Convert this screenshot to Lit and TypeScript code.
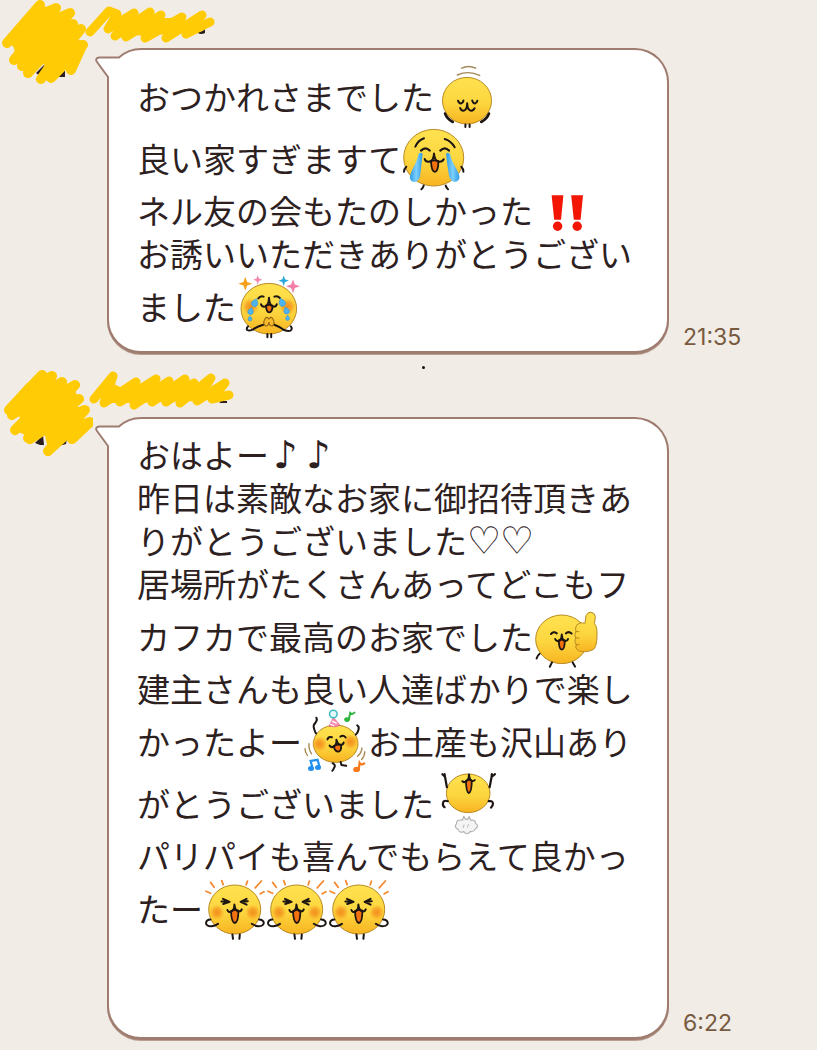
import { LitElement, html, svg, css, nothing, TemplateResult, SVGTemplateResult } from "lit";
import { customElement, property } from "lit/decorators.js";

type Sticker = "nod" | "cry" | "thanks" | "bang" | "thumb" | "party" | "jump" | "joy";
type Part = string | { s: Sticker };
interface Message {
  id: number;
  time: string;
  spare: boolean;
  avatar: string;
  avatarFill: string;
  avatarBits: string[];
  name: string;
  nameFill: string;
  nameBits: string[];
  lines: Part[][];
}

const INK = "#1c1512";

const face = (cx: number, cy: number, rx: number, ry: number) => svg`
  <ellipse cx=${cx} cy=${cy} rx=${rx} ry=${ry} fill="url(#skin)" stroke="#b98a22" stroke-width="1"/>`;
const cheek = (cx: number, cy: number, r = 8) => svg`<circle cx=${cx} cy=${cy} r=${r} fill="url(#blush)"/>`;
const ink = (d: string, w = 2) => svg`
  <path d=${d} fill="none" stroke=${INK} stroke-width=${w} stroke-linecap="round" stroke-linejoin="round"/>`;
const line = (d: string, color: string, w = 1.5) => svg`
  <path d=${d} fill="none" stroke=${color} stroke-width=${w} stroke-linecap="round"/>`;
const tongue = (d: string) => svg`
  <path d=${d} fill="#f4710f" stroke=${INK} stroke-width="1.8" stroke-linejoin="round"/>`;
const spark = (x: number, y: number, r: number, color: string) => svg`
  <path fill=${color} d=${`M${x} ${y - r}L${x + r * 0.26} ${y - r * 0.26}L${x + r} ${y}L${x + r * 0.26} ${y + r * 0.26}L${x} ${y + r}L${x - r * 0.26} ${y + r * 0.26}L${x - r} ${y}L${x - r * 0.26} ${y - r * 0.26}Z`}/>`;
const drop = (x: number, y: number, r: number, tilt: number) => svg`
  <path fill="#4db4ee" stroke="#2f93d6" stroke-width=".5" transform=${`translate(${x} ${y}) rotate(${tilt})`}
    d=${`M0 ${-r * 1.3}C${r * 0.5} ${-r * 0.6} ${r} ${-r * 0.2} ${r} ${r * 0.3}A${r} ${r} 0 0 1 ${-r} ${r * 0.3}C${-r} ${-r * 0.2} ${-r * 0.5} ${-r * 0.6} 0 ${-r * 1.3}Z`}/>`;

const DEFS = svg`
  <defs>
    <linearGradient id="skin" x1="0" y1="0" x2="0" y2="1">
      <stop offset="0" stop-color="#ffe24f"/><stop offset=".55" stop-color="#fcd63f"/><stop offset="1" stop-color="#f8b421"/>
    </linearGradient>
    <radialGradient id="blush">
      <stop offset="0" stop-color="#f28a1c" stop-opacity=".95"/><stop offset=".5" stop-color="#f5961f" stop-opacity=".7"/>
      <stop offset="1" stop-color="#f9b02a" stop-opacity="0"/>
    </radialGradient>
    <linearGradient id="tear" x1="0" y1="0" x2="1" y2="0">
      <stop offset="0" stop-color="#2c9be8"/><stop offset=".5" stop-color="#7fd0fa"/><stop offset="1" stop-color="#2c9be8"/>
    </linearGradient>
  </defs>`;

const ART: Record<Sticker, { label: string; art: SVGTemplateResult }> = {
  nod: {
    label: "おじぎ",
    art: svg`
      ${line("M25.7 1.2Q32.5 -2.2 39.7 1.2", "#a5895a", 1.4)}
      ${line("M21.3 8Q32.5 3 43.7 8.4", "#a5895a", 1.4)}
      ${face(31, 33.7, 24.5, 23.3)}
      ${ink("M22 33.7Q23 36.6 25 36.4Q27.2 36 27.4 33.5")}
      ${ink("M36.2 33.5Q37 36.4 39 36.4Q41 36 41.4 33.7")}
      ${ink("M24.2 41Q25 44 28 43.6Q31 42.6 31.2 36.2Q31.4 42.6 34.4 43.6Q37.6 44 38.6 41.2")}
      ${ink("M9 46.5Q11 52 16.8 55M53 46.5Q51 52 45.2 55", 2.6)}
      ${ink("M29.4 57.5V60M33.6 57.5V60")}`,
  },
  cry: {
    label: "号泣",
    art: svg`
      ${face(30.7, 28.7, 30, 28.3)}
      ${ink("M12.3 17.7Q15 11.4 21 9.3M41.7 10Q48 11.8 51.7 18.3")}
      ${ink("M18 21.6Q22.5 17.2 26.7 21.6M37.3 21.6Q41.8 17.2 46 21.6", 2.2)}
      <path fill="url(#tear)" d="M15.6 25Q17.4 22.6 19.6 24.6Q18.6 35 17.2 46.6Q16.2 53 11.4 53Q6.6 52.6 7 47.6C8.4 40 13.6 35 15.6 25Z"/>
      <path fill="url(#tear)" d="M47 25Q45.2 22.6 43 24.6Q44 35 46 46.6Q47.2 53 52 53Q56.8 52 56.4 47.6C55 40 49 35 47 25Z"/>
      ${tongue("M28 32Q31 30.6 35.4 32Q35.4 42.6 31.8 42.8Q28.4 42.6 28 32Z")}
      ${ink("M21.7 30Q22.4 33 26 32.8Q30.8 31.8 31 24.6Q31.4 31.8 36 32.8Q39.6 33 40.7 30.2")}
      ${ink("M3.3 37.7Q1.2 39.6 1 42.8M58.3 37.7Q60.4 39.6 60.4 42.8M20.7 56.6Q20.2 59 18.3 60.3M42.7 56.6Q43.4 59 45 60.3")}`,
  },
  thanks: {
    label: "感謝",
    art: svg`
      ${face(30.8, 31.7, 27.8, 25.3)}
      ${cheek(12.4, 29.6, 9)}${cheek(49.6, 29.6, 9)}
      ${spark(7.3, 6.8, 7, "#f8a01c")}${spark(19.7, 2.8, 4.6, "#f486ac")}
      ${spark(45.7, 3.7, 5.2, "#28a7dd")}${spark(55, 9.3, 7, "#f17fa8")}
      ${ink("M20.3 21.4Q22.4 18.4 25.6 19.6M36.4 19.6Q39.6 18.2 42 21.2")}
      ${drop(17, 25.6, 3.2, 22)}${drop(12.8, 34, 2.8, 16)}${drop(12, 41.4, 2, 0)}
      ${drop(43.9, 25.2, 3.2, -22)}${drop(48.4, 33.4, 2.8, -16)}${drop(49.6, 40.8, 2, 0)}
      ${tongue("M28 28.6Q31 27.2 34.6 28.6Q34.4 35.2 31.2 35.4Q28.2 35 28 28.6Z")}
      ${ink("M23 27.2Q24 30.2 27 29.6Q30.8 28.4 31 20.8Q31.4 28.4 35 29.6Q38 30 38.8 27.2")}
      ${ink("M25.3 47.7Q18.5 49.5 15 52.6Q10 54.4 8.9 52.8Q8.4 51 10 49.4M36.3 47.7Q42.6 50 46 53Q51.8 55 53.2 53Q54.4 51 52.8 49.4")}
      <path fill="#f9bb2a" stroke="#8d6517" stroke-width="1.1" d="M30.9 42Q28.6 38.6 26.6 42.4Q24.6 47 27.6 49Q30.6 49.4 30.9 45Q31.4 49.4 34.2 49Q37.2 47 35.2 42.4Q33.2 38.6 30.9 42Z"/>
      ${ink("M29.4 57V60.2M33.2 57V60.2")}`,
  },
  thumb: {
    label: "いいね",
    art: svg`
      ${face(26.7, 32.3, 26, 24.3)}
      ${ink("M16 27Q18.6 23.8 21.8 26.4M30.8 26.4Q33.6 23.8 36.6 26.6")}
      ${tongue("M23.8 33.4Q26.6 32 29.8 33.4Q29.6 42.4 26.8 42.6Q24 42.2 23.8 33.4Z")}
      ${ink("M20.2 32Q21 34.6 23.6 34Q26.6 33 26.8 27.6Q27 33 30 34Q32.4 34.4 33 32")}
      ${ink("M4.7 46.8Q2.4 48.4 1.6 51.6M17 55.4L14.8 59.8M37.7 55.4L40 59.6")}
      <path fill="url(#skin)" stroke="#b98a22" stroke-width="1" stroke-linejoin="round"
        d="M50 16.2L51 8.6Q52.6 5 56 5.2Q60 6 60.4 9.6L59.4 16.6Q62.4 19.6 62 28Q62 39 58.6 42.4Q50 46.4 43.4 43.6Q39.4 41.6 41.2 37.6Q38.6 34.6 40.8 31Q38.6 27.6 41 24.6Q39.8 21 41.6 18.2Q44.6 15 50 16.2Z"/>
      <path fill="none" stroke="#b98a22" stroke-width="1" stroke-linecap="round" d="M41 24.6H44M40.8 31H44M41.2 37.6H44"/>`,
  },
  party: {
    label: "パーティー",
    art: svg`
      ${face(31.7, 31.7, 22.3, 18.7)}
      ${cheek(15.6, 32, 8)}${cheek(46.8, 29.8, 8)}
      <path fill="#f790b0" stroke="#e35f8c" stroke-width=".8" stroke-linejoin="round" d="M29.3 5.2L25.2 14.2Q30.6 15.8 36 13.4Z"/>
      <path fill="none" stroke="#fff" stroke-width="1.3" d="M27.6 9L32.8 11.4M26.2 12L30.2 14"/>
      <circle cx="29.3" cy="2" r="3.8" fill="#e2fafa" stroke="#3dbcc4" stroke-width="1.5"/>
      ${line("M44.8 7.4L46.2 1Q48 3 50.4 .6", "#2bb53c", 2)}
      <ellipse cx="43" cy="7.6" rx="2.8" ry="2.3" fill="#2bb53c"/>
      ${ink("M12.4 5.7Q13.6 8 11.6 10.4Q8.8 13 10 16.4Q10.6 19.4 12 21.4M53.2 13.4Q55.6 14.6 54.4 18Q54 20.4 51.8 22.6")}
      ${ink("M23.4 27.4Q24.6 24 28 25.2M36.4 24.6Q39.2 22.6 41.6 25.4")}
      ${tongue("M29.6 34Q32.8 32 37 32.8Q37.8 38.6 34.6 39.6Q31 40 29.6 34Z")}
      ${ink("M25.6 33.6Q27.2 36 29.6 34.6Q33 32.8 32.4 27.8Q33.8 32.6 36.6 32.8Q39.4 32.8 39.6 30.6")}
      ${line("M1 36.6Q1 40.6 3.4 43.4M5 31.6Q4.6 37.6 7.6 41.8M57.9 36Q57.8 40.6 53.6 44.2M60.8 39.8Q60.6 44.6 57.6 47.6", "#a98a52", 1.4)}
      ${ink("M28.6 51.2Q32 53 30.2 55.6Q29.6 57 28.4 58.8M36.7 49.9L37.4 53L42.2 53.8")}
      <g fill="#1f8ff0"><ellipse cx="7" cy="56.6" rx="3" ry="2.5"/><ellipse cx="14" cy="55.4" rx="3" ry="2.5"/></g>
      <path fill="none" stroke="#1f8ff0" stroke-width="2.2" d="M8.6 56.4L6.6 48.8L13.6 47.8L15.6 55"/>
      <ellipse cx="52.6" cy="57.4" rx="3.4" ry="2.7" fill="#f8781c"/>
      ${line("M54.8 56.6L55.6 50.8Q57.4 53.6 60.2 51.4", "#f8781c", 2.2)}`,
  },
  jump: {
    label: "ジャンプ",
    art: svg`
      ${face(32.2, 19.3, 21.8, 19.3)}
      ${ink("M6.4 .2L9 2.8L8.6 .2M9 2.8L10.9 13.2M59 .2L55.6 2.8L55.8 .2M55.6 2.8L53.6 13.2", 2.2)}
      ${ink("M11.8 27.2Q7.4 25.8 7 29Q6.4 32 8.6 33.2M52.8 27.2Q56.6 26.4 57 29.6Q57 32 55 33.6", 2.2)}
      ${tongue("M30 6.8Q33 5 35.8 6.8Q35.6 18.8 32.8 19Q30.2 18.6 30 6.8Z")}
      ${ink("M26.3 7.2Q27.6 9 30 7.4Q33 5.6 33 .4Q33.2 5.6 35.8 6.8Q37.6 7.6 38.8 6")}
      <path fill="#f4f4f4" stroke="#b3b3b3" stroke-width="1.2" stroke-linejoin="round"
        d="M26.4 46.2L27.8 42.4L29.6 45.4L31.6 45.4L33.2 42.6L34.6 46.2Q39.6 45.4 39.4 49.2Q43.6 51.4 39.6 54.8Q37.4 58.4 34.4 57.4Q31 62 27.8 57.6Q23.4 59.4 22 55.4Q17.6 53 20.4 49.8Q20.4 45.2 26.4 46.2Z"/>
      ${line("M28 51L27.4 53.4M32.4 50.6L31.6 53", "#b3b3b3", 1)}`,
  },
  joy: {
    label: "大喜び",
    art: svg`
      ${line("M1 12.2L5.6 14.3M5.6 3.4L9.2 8.2M16.7 1.6L18.2 5.6M42.4 2.2L41.2 5.8M56.4 2L50.2 8.8M59 12.8L55.2 14.8", "#f58a33", 1.8)}
      ${face(29.7, 30.5, 26, 24.5)}
      ${cheek(11.9, 33.3, 8)}${cheek(47.8, 33.3, 8)}
      ${ink("M18 19.8L24.6 22.8L18.2 25M16.4 22.6H23.4M41.6 19.8L35.6 22.8L41.6 25.6M36.4 22.8L42.8 22.2")}
      ${tongue("M26 32Q29.6 30 33.4 31.6Q33.4 43.8 29.8 44Q26.4 43.6 26 32Z")}
      ${ink("M22.4 31Q23.4 33.8 26 32.8Q29.4 31.4 29.4 25.6Q30 31.4 33.2 32.4Q36 32.8 36.8 30.4")}
      ${ink("M5.4 40.4Q1.4 40.6 1 44Q1.2 47.4 6.6 47.2Q10 46.8 13 44.8M54 40.4Q58.4 40.6 58.8 44Q58.4 47.4 53 47.2Q49.6 46.8 46.8 44.8")}
      ${ink("M27.4 55.4L28 59.8M34.8 55.4L34.4 59.8")}`,
  },
  bang: { label: "!!", art: svg`` },
};

const JOY: Part = { s: "joy" };

const MESSAGES: Message[] = [
  {
    id: 1,
    time: "21:35",
    spare: false,
    avatar: "M40 5L7 43L32 18L56 8L14 60L44 24L70 13L22 66L48 38L73 24L28 73L56 42L81 29L41 79L64 46L83 45L51 78L72 54L82 46L71 70",
    avatarFill: "M40 4L24 18L8 40L14 48L16 60L24 64L36 66L44 64L50 76L64 64L72 66L80 46L76 42L78 30L70 28L70 16L56 12Z",
    avatarBits: ["M36 73L45 64L40 76Z", "M58 77L65 68V77Z"],
    name: "M90 32L109 11L117 14L108 29L134 13L115 36L150 12L126 37L161 15L145 38L182 17L166 38L202 15L186 34L210 22",
    nameFill: "M112 14L120 20L134 14L144 18L152 14L162 18H182L184 22L200 18V26L186 32L168 34L146 36L120 34L110 26Z",
    nameBits: ["M197 32Q204 32 205 28V33Q201 35 198 33Z"],
    lines: [
      ["おつかれさまでした", { s: "nod" }],
      ["良い家すぎますて", { s: "cry" }],
      ["ネル友の会もたのしかった", { s: "bang" }],
      ["お誘いいただきありがとうござい"],
      ["ました", { s: "thanks" }],
    ],
  },
  {
    id: 2,
    time: "6:22",
    spare: true,
    avatar: "M42 6L9 41L30 18L52 7L12 46L40 26L62 13L15 61L50 30L75 16L28 69L60 36L79 30L30 70L58 52L85 41L48 82L72 60L90 53L72 70",
    avatarFill: "M42 5L28 14L10 40L14 46L20 48L16 62L30 68L44 62L48 80L62 66L72 68L84 54L84 44L78 40V28L72 16L60 14L52 8Z",
    avatarBits: ["M35 74L43 66L44 76L40 76Z", "M59 77L67 69L66 75Z"],
    name: "M94 30L113 7L104 34L136 13L120 33L156 10L134 36L169 12L152 33L185 10L166 33L194 14L180 34L211 9L197 32L225 14L212 30L229 26",
    nameFill: "M100 28L112 14L120 18L134 16L140 20L154 14L160 18L168 16L174 18L184 14L196 18L208 14L212 20L222 18V28L198 32L134 34L104 34Z",
    nameBits: ["M219 32H227V34H220Z", "M213 16H216V18H213Z"],
    lines: [
      ["おはよー♪♪"],
      ["昨日は素敵なお家に御招待頂きあ"],
      ["りがとうございました♡♡"],
      ["居場所がたくさんあってどこもフ"],
      ["カフカで最高のお家でした", { s: "thumb" }],
      ["建主さんも良い人達ばかりで楽し"],
      ["かったよー", { s: "party" }, "お土産も沢山あり"],
      ["がとうございました", { s: "jump" }],
      ["パリパイも喜んでもらえて良かっ"],
      ["たー", JOY, JOY, JOY],
    ],
  },
];

@customElement("chat-message")
export class ChatMessage extends LitElement {
  @property({ attribute: false }) message!: Message;

  static styles = css`
    :host { display: block; }
    article {
      display: grid;
      grid-template-columns: 88px minmax(0, 1fr);
    }
    svg { display: block; overflow: visible; }
    .avatar { width: 88px; height: 88px; }
    .name { width: 152px; height: 48px; }
    .row { display: flex; align-items: flex-end; padding-left: 19px; }
    .bubble {
      position: relative;
      flex: 1;
      box-sizing: border-box;
      padding: 17px 28px 12px 28px;
      background: #fff;
      border: solid #9f7c70;
      border-width: 2px 2px 3px;
      border-radius: 34px;
      box-shadow: 0 1px 0 #b79c92;
      margin-bottom: 1px;
    }
    .spare { padding-top: 16px; padding-bottom: 96px; }
    .tail {
      position: absolute;
      top: -4px;
      left: -16px;
      width: 54px;
      height: 40px;
    }
    .line {
      display: flex;
      align-items: center;
      min-height: 43px;
      font: 400 33px/39px "Noto Sans CJK JP", sans-serif;
      color: #2d211f;
      white-space: nowrap;
    }
    .text { padding-bottom: 4px; }
    .symbol {
      display: inline-block;
      width: 33px;
      font: 400 38px/30px "DejaVu Sans", sans-serif;
      text-align: center;
    }
    .group { display: flex; padding: 0 2px; }
    .sticker { width: 62px; height: 62px; }
    .bang { width: 34px; height: 36px; margin-left: 16px; }
    time {
      flex: 0 0 134px;
      padding: 0 0 6px 14px;
      font: 400 23px/24px Inter, "Liberation Sans", sans-serif;
      color: #775a40;
    }
  `;

  private sticker(s: Sticker): TemplateResult {
    if (s === "bang") {
      return html`<svg class="bang" viewBox="0 0 34 36" role="img" aria-label="!!">
        <g fill="#f31605">
          <path d="M.6 .2H12.4L10 24.8H3.2Z"/><circle cx="6.6" cy="31.2" r="4.7"/>
          <path d="M20.2 .2H32L29.6 24.8H22.8Z"/><circle cx="26.2" cy="31.2" r="4.7"/>
        </g>
      </svg>`;
    }
    const { label, art } = ART[s];
    return html`<svg class="sticker" viewBox="0 0 62 62" role="img" aria-label=${label}>${DEFS}${art}</svg>`;
  }

  private text(s: string): TemplateResult {
    const pieces = s.split(/([♪♡])/).filter(Boolean);
    return html`<span class="text">${pieces.map((p) => (/[♪♡]/.test(p) ? html`<span class="symbol">${p}</span>` : p))}</span>`;
  }

  private line(parts: Part[]): TemplateResult {
    const out: TemplateResult[] = [];
    let group: TemplateResult[] = [];
    const flush = () => {
      if (group.length) out.push(html`<span class="group">${group}</span>`);
      group = [];
    };
    for (const p of parts) {
      if (typeof p === "string") {
        flush();
        out.push(this.text(p));
      } else {
        group.push(this.sticker(p.s));
      }
    }
    flush();
    return html`<div class="line">${out}</div>`;
  }

  private scribble(d: string, fill: string, bits: string[], w: number): SVGTemplateResult {
    return svg`
      ${bits.map((b) => svg`<path d=${b} fill="#2a1d20"/>`)}
      <path d=${fill} fill="#ffcb05"/>
      <path d=${d} fill="none" stroke="#ffcb05" stroke-width=${w} stroke-linecap="round" stroke-linejoin="round"/>`;
  }

  render() {
    const m = this.message;
    if (!m) return nothing;
    return html`
      <article>
        <svg class="avatar" viewBox="0 0 88 88" aria-hidden="true">${this.scribble(m.avatar, m.avatarFill, m.avatarBits, 10)}</svg>
        <div>
          <svg class="name" viewBox="88 0 152 48" aria-hidden="true">${this.scribble(m.name, m.nameFill, m.nameBits, 9)}</svg>
          <div class="row">
            <div class="bubble ${m.spare ? "spare" : ""}">
              <svg class="tail" viewBox="0 0 54 40" aria-hidden="true">
                <path fill="#f1ece6" d="M0 0H54V3H14V36H0Z"/>
                <path fill="#f1ece6" d="M12 1H52V6L30 20L18 36H12Z"/>
                <path fill="#fff" d="M54 3C40 3 34 6 26 11.5H6Q1.5 12.5 4 16L15 31V40H54Z"/>
                <path fill="none" stroke="#9f7c70" stroke-width="2" stroke-linejoin="round"
                  d="M54 3H48C38 3 32 6 26 11.5H6Q1.5 12.5 4 16L15 31V40"/>
              </svg>
              ${m.lines.map((l) => this.line(l))}
            </div>
            <time>${m.time}</time>
          </div>
        </div>
      </article>
    `;
  }
}

@customElement("app-root")
export class AppRoot extends LitElement {
  static styles = css`
    :host {
      display: block;
      min-height: 100vh;
      box-sizing: border-box;
      background: #f1ece6;
      overflow: hidden;
    }
    .divider {
      display: flex;
      justify-content: center;
      align-items: flex-end;
      height: 14px;
      padding-left: 30px;
    }
    .dot { width: 3px; height: 3px; border-radius: 50%; background: #111; }
  `;

  render() {
    return html`
      <main>
        ${MESSAGES.map(
          (m, i) => html`
            ${i > 0 ? html`<div class="divider"><span class="dot"></span></div>` : nothing}
            <chat-message .message=${m}></chat-message>
          `,
        )}
      </main>
    `;
  }
}
